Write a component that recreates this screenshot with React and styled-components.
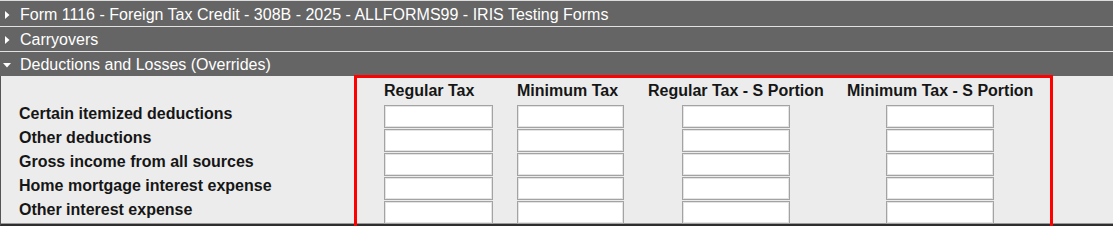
import React from 'react';
import styled, { createGlobalStyle } from 'styled-components';

const GlobalStyle = createGlobalStyle`
    html, body {
        margin:0;
        padding:0;
        background:#ffffff;
        font-family:"Liberation Sans", Arial, sans-serif;
    }
`

const Page = styled.div`
    position:relative;
    width:1113px;
`

const Bars = styled.div`
    background:#656565;
    border-top:1px solid #dcdcdc;
    padding-top:1px;
`

const Bar = styled.div`
    display:flex;
    align-items:center;
    height:22px;
    padding-top:2px;
    color:#ffffff;
    font-size:16px;
    line-height:22px;
    border-bottom:${({last})=> last ? 'none' : '1px solid #e2e2e2'};
`

const Arrow = styled.span`
    display:flex;
    align-items:center;
    justify-content:center;
    width:12px;
    margin-left:1px;
    margin-right:7px;
    margin-top:-1px;
`

const Panel = styled.div`
    background:#ececec;
    border-left:1px solid #555555;
    border-bottom:2px solid #2e2e2e;
    box-shadow:inset 0 -1px 0 #9a9a9a;
    padding:4px 0 0 18px;
`

const Grid = styled.div`
    display:grid;
    grid-template-columns:341px 109px 107px 175px 186px;
    grid-template-rows:24px;
    grid-auto-rows:24px;
    column-gap:24px;
    color:#161616;
    font-size:16px;
    font-weight:bold;
`

const HeadCell = styled.div`
    padding-top:2px;
    white-space:nowrap;
`

const Label = styled.div`
    align-self:start;
    margin-top:1px;
    white-space:nowrap;
`

const Cell = styled.div`
    display:flex;
    justify-content:center;
    align-items:flex-end;
`

const Field = styled.input`
    width:${({w})=>w}px;
    height:23px;
    box-sizing:border-box;
    margin:0;
    border:1px solid #a3a3a3;
    box-shadow:inset 0 0 0 1px #e4e4e4;
    background:#ffffff;
    outline:none;
`

const Highlight = styled.div`
    position:absolute;
    left:354px;
    top:75px;
    width:699px;
    height:156px;
    box-sizing:border-box;
    border:3px solid #ff0000;
    pointer-events:none;
`

const RightArrow = ()=>(
    <svg width="10" height="10" viewBox="0 0 10 10">
        <path d="M3 1 L7.5 5 L3 9 Z" fill="#ffffff"/>
    </svg>
)

const DownArrow = ()=>(
    <svg width="10" height="10" viewBox="0 0 10 10">
        <path d="M1 3 L9 3 L5 7.5 Z" fill="#ffffff"/>
    </svg>
)

const sections = [
    {title:"Form 1116 - Foreign Tax Credit - 308B - 2025 - ALLFORMS99 - IRIS Testing Forms", open:false},
    {title:"Carryovers", open:false},
    {title:"Deductions and Losses (Overrides)", open:true},
]

const columns = [
    {title:"Regular Tax", w:109},
    {title:"Minimum Tax", w:107},
    {title:"Regular Tax - S Portion", w:108},
    {title:"Minimum Tax - S Portion", w:108},
]

const rows = [
    "Certain itemized deductions",
    "Other deductions",
    "Gross income from all sources",
    "Home mortgage interest expense",
    "Other interest expense",
]

const App = ()=>{
    return(
        <>
        <GlobalStyle/>
        <Page>
            <Bars>
                {sections.map((s,i)=>(
                    <Bar key={s.title} last={i===sections.length-1}>
                        <Arrow>{s.open ? <DownArrow/> : <RightArrow/>}</Arrow>
                        {s.title}
                    </Bar>
                ))}
            </Bars>
            <Panel>
                <Grid>
                    <div/>
                    {columns.map(c=>(
                        <HeadCell key={c.title}>{c.title}</HeadCell>
                    ))}
                    {rows.map(r=>(
                        <React.Fragment key={r}>
                            <Label>{r}</Label>
                            {columns.map(c=>(
                                <Cell key={c.title}>
                                    <Field type="text" w={c.w}/>
                                </Cell>
                            ))}
                        </React.Fragment>
                    ))}
                </Grid>
            </Panel>
            <Highlight/>
        </Page>
        </>
    )
}

export default App;
